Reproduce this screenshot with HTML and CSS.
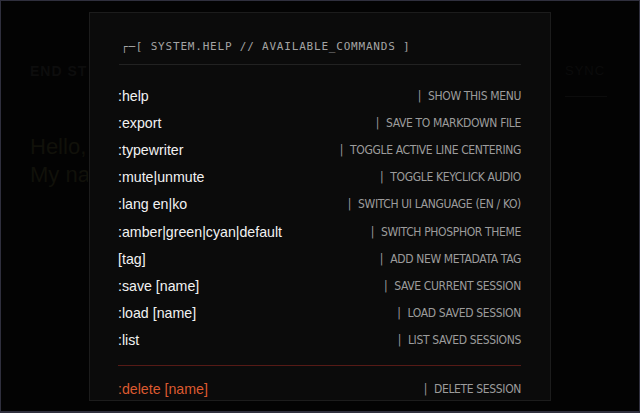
FILE: index.html
```html
<!DOCTYPE html>
<html>
<head>
<meta charset="utf-8">
<link rel="stylesheet" href="styles.css">
</head>
<body>
<div class="screen">
  <div class="app">
    <div class="app-top">
      <div class="app-title">END STREAM</div>
      <div class="app-side">
        <div class="app-side-text">SYNC</div>
        <div class="app-side-line"></div>
      </div>
    </div>
    <div class="app-editor">
      <p>Hello, nice</p>
      <p>My name</p>
    </div>
  </div>

  <div class="modal">
    <div class="modal-head">┌─[ SYSTEM.HELP // AVAILABLE_COMMANDS ]</div>
    <ul class="cmds">
      <li class="row"><span class="cmd">:help</span><span class="desc"><span class="pipe">|</span>SHOW THIS MENU</span></li>
      <li class="row"><span class="cmd">:export</span><span class="desc"><span class="pipe">|</span>SAVE TO MARKDOWN FILE</span></li>
      <li class="row"><span class="cmd">:typewriter</span><span class="desc"><span class="pipe">|</span>TOGGLE ACTIVE LINE CENTERING</span></li>
      <li class="row"><span class="cmd">:mute|unmute</span><span class="desc"><span class="pipe">|</span>TOGGLE KEYCLICK AUDIO</span></li>
      <li class="row"><span class="cmd">:lang en|ko</span><span class="desc"><span class="pipe">|</span>SWITCH UI LANGUAGE (EN / KO)</span></li>
      <li class="row"><span class="cmd">:amber|green|cyan|default</span><span class="desc"><span class="pipe">|</span>SWITCH PHOSPHOR THEME</span></li>
      <li class="row"><span class="cmd">[tag]</span><span class="desc"><span class="pipe">|</span>ADD NEW METADATA TAG</span></li>
      <li class="row"><span class="cmd">:save [name]</span><span class="desc"><span class="pipe">|</span>SAVE CURRENT SESSION</span></li>
      <li class="row"><span class="cmd">:load [name]</span><span class="desc"><span class="pipe">|</span>LOAD SAVED SESSION</span></li>
      <li class="row"><span class="cmd">:list</span><span class="desc"><span class="pipe">|</span>LIST SAVED SESSIONS</span></li>
    </ul>
    <ul class="cmds danger">
      <li class="row"><span class="cmd">:delete [name]</span><span class="desc"><span class="pipe">|</span>DELETE SESSION</span></li>
    </ul>
  </div>
</div>
</body>
</html>
```
FILE: styles.css
```css
html, body {
  margin: 0;
  padding: 0;
  background: #2f2f3d;
}
body {
  padding: 1px 1px 2px 1px;
  width: 640px;
  height: 413px;
  box-sizing: border-box;
  overflow: hidden;
}
.screen {
  position: relative;
  height: 410px;
  background: #030303;
  overflow: hidden;
}
.app {
  padding: 0 0 0 29px;
}
.app-top {
  display: flex;
  justify-content: space-between;
  padding-top: 62px;
}
.app-title {
  width: 58px;
  overflow: hidden;
  white-space: nowrap;
  font-family: "Liberation Sans", Arial, sans-serif;
  font-weight: bold;
  font-size: 14px;
  letter-spacing: 1px;
  color: #0d0d0d;
}
.app-side {
  width: 74px;
  display: flex;
  flex-direction: column;
  gap: 18px;
}
.app-side-text {
  font-family: "Liberation Sans", Arial, sans-serif;
  font-size: 13px;
  letter-spacing: 1px;
  color: #0b0b0b;
}
.app-side-line {
  width: 42px;
  height: 1px;
  background: #0c0c0c;
}
.app-editor {
  width: 58px;
  overflow: hidden;
  white-space: nowrap;
  padding-top: 36px;
  font-family: "Liberation Sans", Arial, sans-serif;
  font-size: 22px;
  line-height: 28px;
  color: #11110a;
}
.app-editor p {
  margin: 0;
}

.modal {
  position: absolute;
  left: 88px;
  top: 11px;
  width: 462px;
  height: 389px;
  box-sizing: border-box;
  background: #0b0b0b;
  border: 1px solid #1c1c1c;
  padding: 27px 29px 0 28px;
  overflow: hidden;
}
.modal-head {
  font-family: "DejaVu Sans Mono", monospace;
  font-size: 11px;
  line-height: 14px;
  letter-spacing: 0.8px;
  color: #a4a4a4;
  padding: 0 0 10px 2px;
  margin-left: 1px;
  border-bottom: 1px solid #222222;
  white-space: nowrap;
}
.cmds {
  list-style: none;
  margin: 17px 0 0 0;
  padding: 0;
}
.row {
  height: 27.2px;
  display: flex;
  align-items: center;
  justify-content: space-between;
}
.cmd {
  font-family: "Liberation Sans", Arial, sans-serif;
  font-size: 14.2px;
  color: #f2f2f2;
}
.desc {
  font-family: "DejaVu Sans Condensed", sans-serif;
  font-size: 12px;
  letter-spacing: -0.35px;
  color: #9c9c9c;
  white-space: nowrap;
}
.pipe {
  margin-right: 7px;
}
.danger {
  margin-top: 11px;
  padding-top: 10px;
  border-top: 1px solid #561a16;
}
.danger .cmd {
  color: #dc5a30;
}
```
